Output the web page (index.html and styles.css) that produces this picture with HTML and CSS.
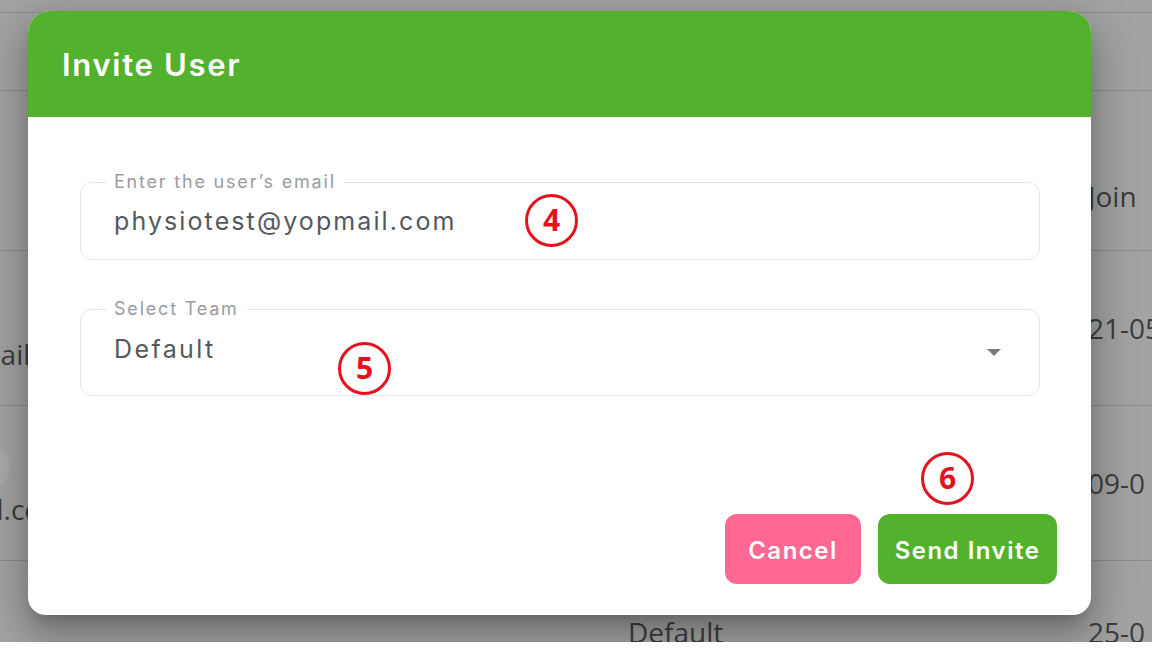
FILE: index.html
```html
<!DOCTYPE html>
<html lang="en">
<head>
<meta charset="utf-8">
<title>Invite User</title>
<link rel="stylesheet" href="styles.css">
</head>
<body>
<div class="screen">
  <div class="backdrop">
    <div class="row row-top"></div>
    <div class="row row-a"></div>
    <div class="row row-head">
      <div class="cell c-email"></div>
      <div class="cell c-team"></div>
      <div class="cell c-date head-date">Join</div>
    </div>
    <div class="row row-user">
      <div class="cell c-email"><span class="mail mail1">physio@yopmail.com</span></div>
      <div class="cell c-team">Default</div>
      <div class="cell c-date">21-05</div>
    </div>
    <div class="row row-user">
      <div class="cell c-email stack"><span class="avatar"></span><span class="mail mail2">demo@gmail.com</span></div>
      <div class="cell c-team">Default</div>
      <div class="cell c-date">09-0</div>
    </div>
    <div class="row row-last">
      <div class="cell c-email"></div>
      <div class="cell c-team">Default</div>
      <div class="cell c-date">25-0</div>
    </div>
  </div>

  <div class="modal" role="dialog" aria-labelledby="dlg-title">
    <div class="modal-header">
      <h2 id="dlg-title" class="modal-title">Invite User</h2>
    </div>
    <div class="modal-body">
      <fieldset class="field field-email">
        <legend class="field-label">Enter the user’s email</legend>
        <div class="field-value">physiotest@yopmail.com</div>
      </fieldset>
      <fieldset class="field field-select">
        <legend class="field-label">Select Team</legend>
        <div class="field-value select-value">
          <span>Default</span>
          <span class="caret"></span>
        </div>
      </fieldset>
      <div class="actions">
        <button class="btn btn-cancel" type="button">Cancel</button>
        <button class="btn btn-send" type="button">Send Invite</button>
      </div>
    </div>
  </div>

  <span class="marker m4">4</span>
  <span class="marker m5">5</span>
  <span class="marker m6">6</span>
</div>
</body>
</html>
```

FILE: styles.css
```css
* { box-sizing: border-box; }

html, body {
  margin: 0;
  padding: 0;
  background: #ffffff;
}

body {
  width: 1152px;
  height: 648px;
  overflow: hidden;
  font-family: Inter, "Open Sans", "Liberation Sans", sans-serif;
}

.screen {
  position: relative;
  width: 1152px;
  height: 642px;
  background: #a3a3a3;
  overflow: hidden;
}

/* ---------- dimmed page behind the dialog ---------- */
.backdrop {
  display: flex;
  flex-direction: column;
  font-family: "Open Sans", "Liberation Sans", sans-serif;
  font-size: 28px;
  color: #3b3d40;
}

.row {
  display: grid;
  grid-template-columns: 628px 459px 1fr;
  align-items: center;
  border-bottom: 1.5px solid #8e8e8e;
}

.row-top { height: 12.5px; }
.row-a { height: 78px; }
.row-head { height: 160px; }
.row-user { height: 155px; }
.row-last { height: 90px; border-bottom: none; align-items: start; }

.cell { white-space: nowrap; overflow: hidden; }

.c-date { padding-left: 1px; }

.head-date { padding-top: 52px; }

.c-email {
  display: flex;
  flex-direction: column;
  line-height: 40px;
}

.mail1 { margin-left: -184px; margin-top: 52px; }

.stack { align-items: flex-start; }

.avatar {
  width: 44px;
  height: 44px;
  border-radius: 50%;
  background: #ababab;
  margin-left: -34px;
  margin-top: 8px;
}

.mail2 { margin-top: 0; margin-left: -168px; }

.row-last .cell { padding-top: 56px; line-height: 30px; }

/* ---------- dialog ---------- */
.modal {
  position: absolute;
  left: 28px;
  top: 11px;
  width: 1063px;
  height: 604px;
  background: #ffffff;
  border-radius: 22px 22px 18px 18px;
  overflow: hidden;
  box-shadow: 0 11px 15px -7px rgba(0,0,0,0.22),
              0 24px 38px 3px rgba(0,0,0,0.16),
              0 9px 46px 8px rgba(0,0,0,0.14);
  display: flex;
  flex-direction: column;
}

.modal-header {
  height: 106px;
  background: #52b22e;
  display: flex;
  align-items: center;
  padding: 0 34px;
}

.modal-title {
  margin: 0;
  color: #ffffff;
  font-size: 31px;
  font-weight: 600;
  letter-spacing: 1.7px;
  padding-top: 1px;
}

.modal-body {
  flex: 1;
  display: flex;
  flex-direction: column;
  padding: 55px 34px 31px 52px;
}

.field {
  margin: 0 17px 0 0;
  padding: 0 24px 0 25px;
  border: 1.5px solid #e2e6ea;
  border-radius: 12px;
  min-width: 0;
}

.field-label {
  padding: 0 8px;
  font-size: 18px;
  line-height: 20px;
  color: #9a9c9f;
  letter-spacing: 1.8px;
}

.field-value {
  padding-left: 8px;
  font-size: 25px;
  color: #54585d;
  letter-spacing: 2.1px;
}

.field-email .field-value {
  line-height: 58px;
  padding-bottom: 9px;
}

.field-select {
  margin-top: 39px;
}

.select-value {
  display: flex;
  align-items: center;
  justify-content: space-between;
  height: 60px;
  margin-bottom: 16px;
  letter-spacing: 2.4px;
}

.caret {
  width: 0;
  height: 0;
  border-left: 7px solid transparent;
  border-right: 7px solid transparent;
  border-top: 7px solid #7a7c7f;
  margin-right: 14px;
  margin-top: 6px;
}

.actions {
  margin-top: auto;
  display: flex;
  justify-content: flex-end;
  gap: 17px;
}

.btn {
  height: 70px;
  border: none;
  border-radius: 12px;
  color: #ffffff;
  font-family: Inter, "Open Sans", "Liberation Sans", sans-serif;
  font-size: 24px;
  font-weight: 600;
  letter-spacing: 1.5px;
  padding: 3px 0 0;
  cursor: pointer;
}

.btn-cancel {
  width: 136px;
  background: #ff6892;
}

.btn-send {
  width: 179px;
  background: #52b22e;
}

/* ---------- red annotation circles ---------- */
.marker {
  position: absolute;
  width: 53px;
  height: 53px;
  border: 3.5px solid #e3121d;
  border-radius: 50%;
  color: #e3121d;
  font-family: "Open Sans", "Liberation Sans", sans-serif;
  font-weight: 700;
  font-size: 30px;
  display: flex;
  align-items: center;
  justify-content: center;
  line-height: 1;
  padding-bottom: 2px;
}

.m4 { left: 525px; top: 194px; }
.m5 { left: 338px; top: 342px; }
.m6 { left: 921px; top: 452px; }
```
